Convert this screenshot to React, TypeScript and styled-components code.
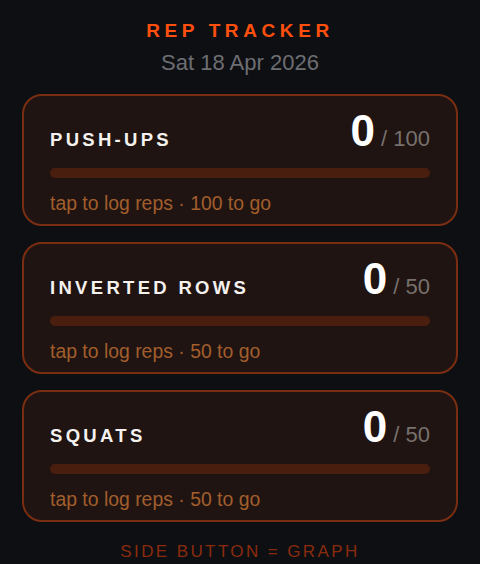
import React from 'react'
import styled, { createGlobalStyle } from 'styled-components'

const GlobalStyle = createGlobalStyle`
  html, body {
    margin: 0;
    padding: 0;
    background: #0e0f12;
  }
  body {
    font-family: "Liberation Sans", Arial, sans-serif;
  }
`

const Screen = styled.div`
  width: 480px;
  height: 564px;
  box-sizing: border-box;
  padding: 20px 22px 0;
  display: flex;
  flex-direction: column;
  align-items: stretch;
  overflow: hidden;
`

const Title = styled.h1`
  margin: 0;
  text-align: center;
  color: #ff4f0f;
  font-size: 19px;
  font-weight: 700;
  letter-spacing: 4.6px;
  line-height: 22px;
`

const DateLine = styled.div`
  text-align: center;
  color: #6d6e73;
  font-size: 22px;
  line-height: 26px;
  margin-top: 8px;
`

const CardList = styled.div`
  display: flex;
  flex-direction: column;
  gap: 16px;
  margin-top: 18px;
`

const Card = styled.div`
  box-sizing: border-box;
  height: 132px;
  border: 2px solid #7a2d10;
  border-radius: 20px;
  background: #1f1411;
  padding: 0 26px;
  display: flex;
  flex-direction: column;
`

const TopRow = styled.div`
  display: flex;
  align-items: baseline;
  justify-content: space-between;
  height: 62px;
  margin-top: 10px;
`

const Name = styled.div`
  color: #f4f1ee;
  font-size: 18.5px;
  font-weight: 700;
  letter-spacing: 3.3px;
`

const Count = styled.div`
  display: flex;
  align-items: baseline;
  gap: 6px;
`

const Done = styled.span`
  color: #ffffff;
  font-size: 44px;
  font-weight: 700;
`

const Goal = styled.span`
  color: #77716d;
  font-size: 22px;
`

const Track = styled.div`
  height: 10px;
  border-radius: 5px;
  background: #4a1e0e;
  overflow: hidden;
`

const Fill = styled.div`
  height: 100%;
  background: #ff4f0f;
`

const Hint = styled.div`
  margin-top: 14px;
  color: #a25e2c;
  font-size: 19.4px;
`

const Footer = styled.div`
  margin-top: 20px;
  text-align: center;
  color: #8a2b0e;
  font-size: 17px;
  letter-spacing: 2.4px;
`

const exercises = [
  { name: 'PUSH-UPS', done: 0, goal: 100 },
  { name: 'INVERTED ROWS', done: 0, goal: 50 },
  { name: 'SQUATS', done: 0, goal: 50 },
]

export default function App() {
  return (
    <>
      <GlobalStyle />
      <Screen>
        <Title>REP TRACKER</Title>
        <DateLine>Sat 18 Apr 2026</DateLine>
        <CardList>
          {exercises.map(ex => (
            <Card key={ex.name}>
              <TopRow>
                <Name>{ex.name}</Name>
                <Count>
                  <Done>{ex.done}</Done>
                  <Goal>/ {ex.goal}</Goal>
                </Count>
              </TopRow>
              <Track>
                <Fill style={{ width: `${(ex.done / ex.goal) * 100}%` }} />
              </Track>
              <Hint>tap to log reps · {ex.goal - ex.done} to go</Hint>
            </Card>
          ))}
        </CardList>
        <Footer>SIDE BUTTON = GRAPH</Footer>
      </Screen>
    </>
  )
}
